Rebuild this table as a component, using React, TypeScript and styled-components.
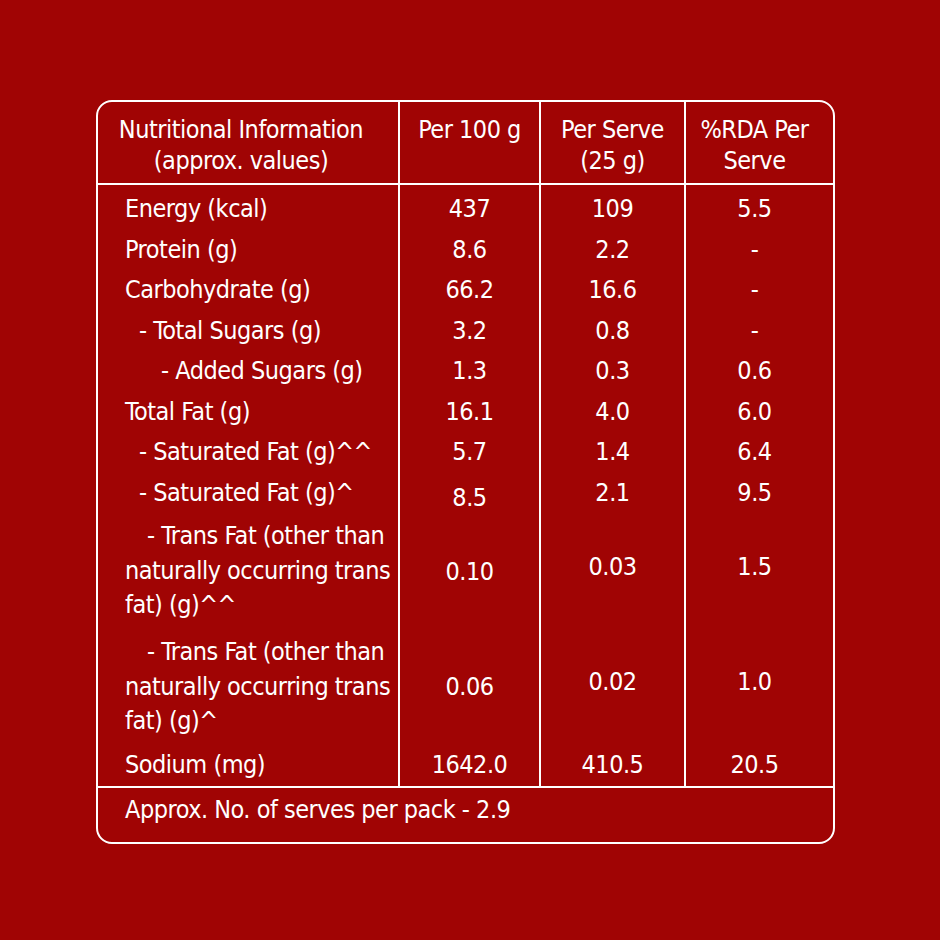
import React from "react";
import styled, { createGlobalStyle } from "styled-components";

const GlobalStyle = createGlobalStyle`
  html, body {
    margin: 0;
    padding: 0;
    background: #a00404;
  }
  * { box-sizing: border-box; }
`;

const Page = styled.div`
  width: 940px;
  height: 940px;
  background: #a00404;
  padding: 100px 0 0 96px;
  font-family: "Liberation Sans Narrow", "DejaVu Sans Condensed", "Roboto Condensed", "Liberation Sans", sans-serif;
  color: #ffffff;
  font-size: 25px;
  letter-spacing: -0.5px;
`;

const Panel = styled.div`
  width: 739px;
  height: 744px;
  border: 2px solid #ffffff;
  border-radius: 16px;
  display: flex;
  flex-direction: column;
`;

const Row = styled.div<{ $h: number; $header?: boolean; $pt?: number }>`
  display: grid;
  grid-template-columns: 300px 141px 145px 1fr;
  height: ${(p) => p.$h}px;
  ${(p) => (p.$header ? "border-bottom: 2px solid #ffffff;" : "")}
  & > * {
    padding-top: ${(p) => p.$pt ?? 0}px;
  }
`;

const HeadCell = styled.div<{ $first?: boolean; $pr?: number }>`
  display: flex;
  justify-content: center;
  align-items: flex-start;
  text-align: center;
  line-height: 31px;
  padding-top: 12px !important;
  padding-right: ${(p) => p.$pr ?? 0}px;
  ${(p) => (p.$first ? "" : "border-left: 2px solid #ffffff;")}
`;

const LabelCell = styled.div<{ $indent: number }>`
  display: flex;
  align-items: center;
  padding-left: 27px;
  line-height: 34.5px;
  & > span {
    display: block;
    text-indent: ${(p) => p.$indent}px;
    white-space: nowrap;
  }
`;

const ValueCell = styled.div<{ $pr?: number; $dy?: number }>`
  display: flex;
  align-items: center;
  justify-content: center;
  border-left: 2px solid #ffffff;
  padding-right: ${(p) => p.$pr ?? 0}px;
  line-height: 34.5px;
  & > span {
    position: relative;
    top: ${(p) => p.$dy ?? 0}px;
  }
`;

const Footer = styled.div`
  border-top: 2px solid #ffffff;
  flex: 1;
  padding: 5px 0 0 27px;
  line-height: 34.5px;
`;

type Item = {
  label: React.ReactNode;
  indent: number;
  v: [string, string, string];
  h: number;
  dy?: [number, number, number];
};

const items: Item[] = [
  { label: "Energy (kcal)", indent: 0, v: ["437", "109", "5.5"], h: 44.5 },
  { label: "Protein (g)", indent: 0, v: ["8.6", "2.2", "-"], h: 40.5 },
  { label: "Carbohydrate (g)", indent: 0, v: ["66.2", "16.6", "-"], h: 40.5 },
  { label: "- Total Sugars (g)", indent: 14, v: ["3.2", "0.8", "-"], h: 40.5 },
  { label: "- Added Sugars (g)", indent: 36, v: ["1.3", "0.3", "0.6"], h: 40.5 },
  { label: "Total Fat (g)", indent: 0, v: ["16.1", "4.0", "6.0"], h: 40.5 },
  { label: "- Saturated Fat (g)^^", indent: 14, v: ["5.7", "1.4", "6.4"], h: 40.5 },
  { label: "- Saturated Fat (g)^", indent: 14, v: ["8.5", "2.1", "9.5"], h: 40.5, dy: [5, 0, 0] },
  {
    label: (
      <>
        - Trans Fat (other than
        <br />
        naturally occurring trans
        <br />
        fat) (g)^^
      </>
    ),
    indent: 22,
    v: ["0.10", "0.03", "1.5"],
    h: 116,
    dy: [1, -4, -4],
  },
  {
    label: (
      <>
        - Trans Fat (other than
        <br />
        naturally occurring trans
        <br />
        fat) (g)^
      </>
    ),
    indent: 22,
    v: ["0.06", "0.02", "1.0"],
    h: 116,
    dy: [0, -5, -5],
  },
  { label: "Sodium (mg)", indent: 0, v: ["1642.0", "410.5", "20.5"], h: 41, dy: [0, 0, 0] },
];

export default function App() {
  return (
    <Page>
      <GlobalStyle />
      <Panel>
        <Row $h={83} $header>
          <HeadCell $first $pr={14}>
            Nutritional Information
            <br />
            (approx. values)
          </HeadCell>
          <HeadCell>Per 100 g</HeadCell>
          <HeadCell>
            Per Serve
            <br />
            (25 g)
          </HeadCell>
          <HeadCell $pr={10}>
            %RDA Per
            <br />
            Serve
          </HeadCell>
        </Row>
        {items.map((it, i) => (
          <Row key={i} $h={it.h} $pt={i === 0 ? 4 : 0}>
            <LabelCell $indent={it.indent}>
              <span>{it.label}</span>
            </LabelCell>
            <ValueCell $dy={it.dy?.[0]}>
              <span>{it.v[0]}</span>
            </ValueCell>
            <ValueCell $dy={it.dy?.[1]}>
              <span>{it.v[1]}</span>
            </ValueCell>
            <ValueCell $pr={10} $dy={it.dy?.[2]}>
              <span>{it.v[2]}</span>
            </ValueCell>
          </Row>
        ))}
        <Footer>Approx. No. of serves per pack - 2.9</Footer>
      </Panel>
    </Page>
  );
}
